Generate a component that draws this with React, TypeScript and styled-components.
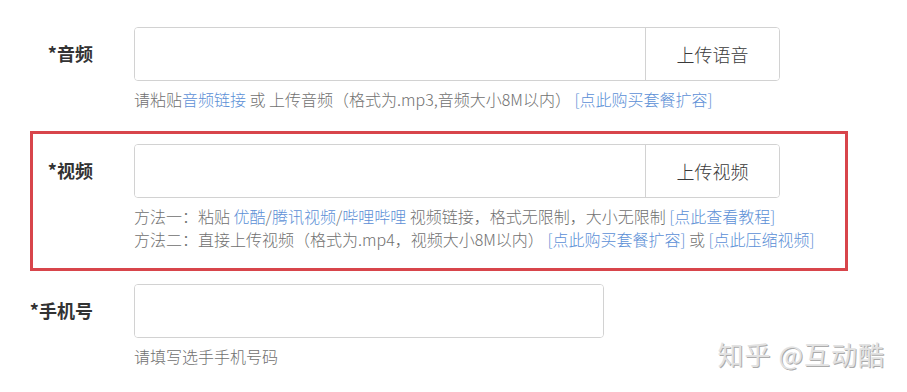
import styled, { createGlobalStyle } from 'styled-components';

const GlobalStyle = createGlobalStyle`
  html, body {
    margin: 0;
    padding: 0;
    background: #fff;
  }
  body {
    font-family: "Noto Sans CJK SC", "Noto Sans", sans-serif;
    color: #333;
  }
`;

const Page = styled.div`
  position: relative;
  width: 907px;
  height: 392px;
  overflow: hidden;
  padding-top: 14px;
  box-sizing: border-box;
`;

const Section = styled.div<{ $highlight?: boolean }>`
  display: grid;
  grid-template-columns: 60px 1fr;
  column-gap: 41px;
  width: 818px;
  box-sizing: border-box;
  margin-left: 30px;
  padding: 10px 0 17px;
  border: 3px solid ${({ $highlight }) => ($highlight ? '#d8454b' : 'transparent')};
`;

const Label = styled.div`
  display: flex;
  justify-content: flex-end;
  white-space: nowrap;
  font-size: 18px;
  font-weight: bold;
  line-height: 52px;
  color: #333;
`;

const Body = styled.div`
  display: flex;
  flex-direction: column;
`;

const InputGroup = styled.div<{ $width: number }>`
  display: flex;
  width: ${({ $width }) => $width}px;
  height: 54px;
  box-sizing: border-box;
  border: 1px solid #d2d2d2;
  border-radius: 4px;
  overflow: hidden;
`;

const Input = styled.input`
  flex: 1;
  min-width: 0;
  border: none;
  outline: none;
  padding: 0 12px;
  font-size: 16px;
  font-family: inherit;
  background: #fff;
`;

const UploadButton = styled.button`
  width: 134px;
  border: none;
  border-left: 1px solid #d2d2d2;
  background: #fff;
  font-family: inherit;
  font-size: 18px;
  font-weight: 300;
  color: #3a3a3a;
  cursor: pointer;
`;

const Help = styled.div`
  margin-top: 7px;
  font-size: 16px;
  font-weight: 300;
  line-height: 23px;
  color: #707070;
  white-space: nowrap;
`;

const Link = styled.a`
  color: #5b8fd6;
  text-decoration: none;
`;

const Watermark = styled.div`
  position: absolute;
  right: 22px;
  bottom: 20px;
  font-size: 26px;
  letter-spacing: 1px;
  color: #e2e2e2;
  text-shadow: 1px 1px 0 #ababab;
  white-space: nowrap;
`;

export default function App() {
  return (
    <Page>
      <GlobalStyle />
      <Section>
        <Label>*音频</Label>
        <Body>
          <InputGroup $width={646}>
            <Input />
            <UploadButton>上传语音</UploadButton>
          </InputGroup>
          <Help>
            请粘贴<Link>音频链接</Link> 或 上传音频（格式为.mp3,音频大小8M以内） <Link>[点此购买套餐扩容]</Link>
          </Help>
        </Body>
      </Section>

      <Section $highlight>
        <Label>*视频</Label>
        <Body>
          <InputGroup $width={646}>
            <Input />
            <UploadButton>上传视频</UploadButton>
          </InputGroup>
          <Help>
            方法一：粘贴 <Link>优酷</Link>/<Link>腾讯视频</Link>/<Link>哔哩哔哩</Link> 视频链接，格式无限制，大小无限制 <Link>[点此查看教程]</Link>
            <br />
            方法二：直接上传视频（格式为.mp4，视频大小8M以内） <Link>[点此购买套餐扩容]</Link> 或 <Link>[点此压缩视频]</Link>
          </Help>
        </Body>
      </Section>

      <Section>
        <Label>*手机号</Label>
        <Body>
          <InputGroup $width={470}>
            <Input />
          </InputGroup>
          <Help>请填写选手手机号码</Help>
        </Body>
      </Section>

      <Watermark>知乎 @互动酷</Watermark>
    </Page>
  );
}
